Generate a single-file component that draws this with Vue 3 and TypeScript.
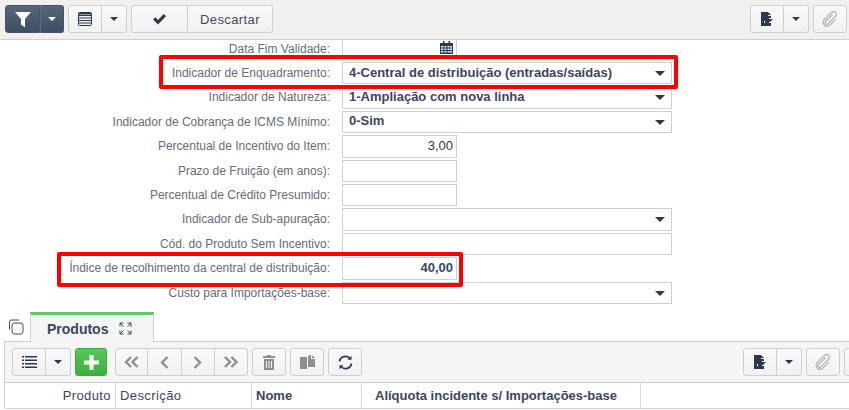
<script setup lang="ts">
interface Row { label: string; kind: 'date' | 'select' | 'short' | 'long'; value?: string; light?: boolean }
const rows: Row[] = [
  { label: 'Data Fim Validade:', kind: 'date' },
  { label: 'Indicador de Enquadramento:', kind: 'select', value: '4-Central de distribuição (entradas/saídas)' },
  { label: 'Indicador de Natureza:', kind: 'select', value: '1-Ampliação com nova linha' },
  { label: 'Indicador de Cobrança de ICMS Mínimo:', kind: 'select', value: '0-Sim' },
  { label: 'Percentual de Incentivo do Item:', kind: 'short', value: '3,00', light: true },
  { label: 'Prazo de Fruição (em anos):', kind: 'short' },
  { label: 'Percentual de Crédito Presumido:', kind: 'short' },
  { label: 'Indicador de Sub-apuração:', kind: 'select' },
  { label: 'Cód. do Produto Sem Incentivo:', kind: 'long' },
  { label: 'Índice de recolhimento da central de distribuição:', kind: 'short', value: '40,00' },
  { label: 'Custo para Importações-base:', kind: 'select' },
]
</script>

<template>
  <div class="page">
    <header class="toolbar">
      <div class="group dark">
        <button class="btn w36">
          <svg width="16" height="17" viewBox="0 0 16 17"><path d="M0 1h16L10 8v8.500L6 13.500V8z" fill="#fff" /></svg>
        </button>
        <button class="btn w24"><i class="caret white"></i></button>
      </div>
      <div class="group">
        <button class="btn w33">
          <svg width="15" height="14" viewBox="0 0 15 14" fill="none" stroke="#2b3a52"><rect x=".5" y=".5" width="13" height="13" rx="1" /><path d="M1 3.500h12M1 6h12M1 8.500h12M1 11h12" /><path d="M1 1.500h12" stroke-width="2" /></svg>
        </button>
        <button class="btn w25"><i class="caret"></i></button>
      </div>
      <div class="group">
        <button class="btn w57">
          <svg width="15" height="12" viewBox="0 0 15 12"><path d="M1 6.500l2.300-2.300 2.700 2.700L11.700 1 14 3.300 6 11.500z" fill="#2b3a52" /></svg>
        </button>
        <button class="btn w85 text">Descartar</button>
      </div>
      <div class="spacer"></div>
      <div class="group">
        <button class="btn w33">
          <svg width="13" height="14" viewBox="0 0 13 14"><path d="M0 0h6l1 0v4h3v2H8v1h4l-2 2-1 1H8v1h2v3H0z" fill="#2b3a52" /><path d="M7 0l3 3H7z" fill="#2b3a52" /><path d="M3 9h1v2H3z" fill="#fff" /></svg>
        </button>
        <button class="btn w25"><i class="caret"></i></button>
      </div>
      <div class="group">
        <button class="btn w33 muted">
          <svg width="16" height="16" viewBox="0 0 16 16" fill="none" stroke="#a9a9a9" stroke-width="1.100"><path d="M10.500 3.500L3.500 10.500a1.700 1.700 0 0 0 2.400 2.400l7.500-7.500a2.800 2.800 0 0 0-4-4L2 8.800a4 4 0 0 0 5.600 5.600l6-6" /></svg>
        </button>
      </div>
    </header>

    <main class="form">
      <div v-for="(row, i) in rows" :key="i" class="row">
        <label class="label">{{ row.label }}</label>
        <div class="field" :class="row.kind">
          <span v-if="row.value" class="value" :class="{ light: row.light }">{{ row.value }}</span>
          <i v-if="row.kind === 'select'" class="caret field-caret"></i>
          <svg v-if="row.kind === 'date'" class="cal" width="13" height="13" viewBox="0 0 13 13">
            <path d="M0 2h13v11H0z" fill="#2b3a52" /><path d="M3 0h1.500v3H3zM8.500 0H10v3H8.500z" fill="#2b3a52" />
            <path d="M1 5h2.500v1.500H1zM4.500 5h2v1.500h-2zM7.500 5h2v1.500h-2zM10 5h2v1.500h-2zM1 7.500h2.500V9H1zM4.500 7.500h2V9h-2zM7.500 7.500h2V9h-2zM10 7.500h2V9h-2zM1 10h2.500v1.500H1zM4.500 10h2v1.500h-2zM7.500 10h2v1.500h-2zM10 10h2v1.500h-2z" fill="#e8e8e8" />
          </svg>
        </div>
      </div>
      <div class="highlight h1"></div>
      <div class="highlight h2"></div>
    </main>

    <section class="tabs">
      <svg class="copy" width="16" height="16" viewBox="0 0 16 16" fill="none" stroke="#3a4660"><rect x="4" y="4" width="11" height="11" rx="2.500" /><path d="M1.500 10.500V3a2 2 0 0 1 2-2h7.500" /></svg>
      <div class="tab">
        <span>Produtos</span>
        <svg width="13" height="13" viewBox="0 0 13 13" fill="none" stroke="#3a4660"><path d="M1 4.500V1h3.500M8.500 1H12v3.500M12 8.500V12H8.500M4.500 12H1V8.500M1 1l3.500 3.500M12 1L8.500 4.500M12 12L8.500 8.500M1 12l3.500-3.500" /></svg>
      </div>
    </section>

    <section class="panel">
      <div class="subbar">
        <div class="group">
          <button class="btn w33">
            <svg width="15" height="12" viewBox="0 0 15 12" fill="#2b3a52"><path d="M0 0h2v1.500H0zM3 0h12v1.500H3zM0 3.500h2V5H0zM3 3.500h12V5H3zM0 7h2v1.500H0zM3 7h12v1.500H3zM0 10.500h2V12H0zM3 10.500h12V12H3z" /></svg>
          </button>
          <button class="btn w25"><i class="caret"></i></button>
        </div>
        <button class="plus">
          <svg width="15" height="15" viewBox="0 0 15 15"><path d="M5.500 0h4v5.500H15v4H9.500V15h-4V9.500H0v-4h5.500z" fill="#fff" /></svg>
        </button>
        <div class="group nav">
          <button class="btn navbtn"><svg width="15" height="12" viewBox="0 0 15 12" fill="none" stroke="#8b8f96" stroke-width="2.400"><path d="M7 1L2 6l5 5M13.500 1l-5 5 5 5" /></svg></button>
          <button class="btn navbtn"><svg width="9" height="13" viewBox="0 0 9 13" fill="none" stroke="#8b8f96" stroke-width="2.400"><path d="M7.500 1L2 6.500 7.500 12" /></svg></button>
          <button class="btn navbtn"><svg width="9" height="13" viewBox="0 0 9 13" fill="none" stroke="#8b8f96" stroke-width="2.400"><path d="M1.500 1L7 6.500 1.500 12" /></svg></button>
          <button class="btn navbtn"><svg width="15" height="12" viewBox="0 0 15 12" fill="none" stroke="#8b8f96" stroke-width="2.400"><path d="M2 1l5 5-5 5M8.500 1l5 5-5 5" /></svg></button>
        </div>
        <div class="group">
          <button class="btn w33"><svg width="12" height="15" viewBox="0 0 12 15" fill="#8b8f96"><path d="M4 0h4v1h4v2H0V1h4zM1 4h10v11H1zM3 6v7h1V6zM5.500 6v7h1V6zM8 6v7h1V6z" fill-rule="evenodd" /></svg></button>
        </div>
        <div class="group">
          <button class="btn w33"><svg width="15" height="14" viewBox="0 0 15 14" fill="#8b8f96"><path d="M0 2h7v12H0zM8 1l2-1h1v4h4v8H8zM12 0l3 3h-3z" /></svg></button>
        </div>
        <div class="group">
          <button class="btn w33"><svg width="15" height="15" viewBox="0 0 15 15" fill="none" stroke="#2b3a52" stroke-width="1.700"><path d="M1.500 6.500A6 6 0 0 1 12 3.500M13.500 8.500A6 6 0 0 1 3 11.500" /><path d="M13.500 .8v4h-4zM1.500 14.200v-4h4z" fill="#2b3a52" stroke="none" /></svg></button>
        </div>
        <div class="spacer"></div>
        <div class="group">
          <button class="btn w33">
            <svg width="13" height="14" viewBox="0 0 13 14"><path d="M0 0h6l1 0v4h3v2H8v1h4l-2 2-1 1H8v1h2v3H0z" fill="#2b3a52" /><path d="M7 0l3 3H7z" fill="#2b3a52" /><path d="M3 9h1v2H3z" fill="#fff" /></svg>
          </button>
          <button class="btn w25"><i class="caret"></i></button>
        </div>
        <div class="group">
          <button class="btn w33 muted">
            <svg width="16" height="16" viewBox="0 0 16 16" fill="none" stroke="#a9a9a9" stroke-width="1.100"><path d="M10.500 3.500L3.500 10.500a1.700 1.700 0 0 0 2.400 2.400l7.500-7.500a2.800 2.800 0 0 0-4-4L2 8.800a4 4 0 0 0 5.600 5.600l6-6" /></svg>
          </button>
        </div>
        <div class="group"><button class="btn w33"></button></div>
      </div>
      <div class="grid-head">
        <div class="cell c-prod">Produto</div>
        <div class="cell c-desc">Descrição</div>
        <div class="cell c-nome">Nome</div>
        <div class="cell c-aliq">Alíquota incidente s/ Importações-base</div>
        <div class="cell c-rest"></div>
      </div>
    </section>
  </div>
</template>

<style>
html, body { margin: 0; background: #fff; overflow: hidden; }
</style>

<style scoped>
.page {
  width: 849px;
  height: 410px;
  overflow: hidden;
  font-family: "Liberation Sans", Arial, sans-serif;
  font-size: 12px;
  color: #3a4660;
  background: #fff;
  position: relative;
}
.toolbar {
  background: #f1f0ee;
  border-bottom: 1px solid #d0d0d0;
  display: flex;
  gap: 4px;
  padding: 5px 2px 0 5px;
  box-sizing: border-box;
  height: 40px;
  position: relative;
  z-index: 1;
}
.spacer { flex: 1; }
.group { display: flex; height: 28px; }
.btn {
  height: 28px;
  box-sizing: border-box;
  padding: 0;
  margin: 0;
  border: 1px solid #cfcfcf;
  border-left-width: 0;
  background: linear-gradient(#f9f9f9, #f1f1f1);
  display: flex;
  align-items: center;
  justify-content: center;
  font: inherit;
  color: inherit;
}
.group .btn:first-child { border-left-width: 1px; border-radius: 3px 0 0 3px; }
.group .btn:last-child { border-radius: 0 3px 3px 0; }
.group .btn:only-child { border-radius: 3px; }
.w24 { width: 24px; }
.w25 { width: 25px; }
.w33 { width: 34px; }
.w36 { width: 35px; }
.w57 { width: 57px; }
.w85 { width: 85px; }
.navbtn { width: 33.250px; }
.text { font-size: 13px; letter-spacing: .4px; color: #3f4b62; }
.group.dark .btn { background: linear-gradient(#566579, #3f4e63); border-color: #45546a; }
.group.dark .btn + .btn { border-left: 1px solid #5c6a7e; }
.caret {
  display: block;
  width: 0;
  height: 0;
  border-left: 4px solid transparent;
  border-right: 4px solid transparent;
  border-top: 4px solid #2b3a52;
}
.caret.white { border-top-color: #fff; }

.form {
  height: 272px;
  position: relative;
  overflow: hidden;
}
.row {
  display: flex;
  align-items: flex-start;
  height: 24.400px;
}
.row:first-child { margin-top: -2.400px; }
.label {
  width: 330px;
  text-align: right;
  font-size: 12px;
  line-height: 22px;
  color: #646c7a;
  flex: none;
}
.field {
  margin-left: 12px;
  height: 22.400px;
  box-sizing: border-box;
  border: 1px solid #cfcfcf;
  background: #fff;
  display: flex;
  align-items: center;
  position: relative;
  flex: none;
}
.field.select, .field.long { width: 330px; }
.field.short { width: 115px; justify-content: flex-end; padding-right: 3px; }
.field.date { width: 115px; border-top: 0; border-bottom: 0; border-right: 1px solid #cfcfcf; }
.field .cal { position: absolute; left: 97px; top: 3px; }
.value {
  font-weight: 700;
  font-size: 13px;
  color: #3a4660;
  white-space: nowrap;
  padding-bottom: 2px;
}
.value.light { font-weight: 400; color: #2b3a52; }
.field.select .value { padding-left: 6px; }
.field-caret {
  position: absolute;
  right: 6px;
  top: 8px;
  border-left-width: 5px;
  border-right-width: 5px;
  border-top-width: 5px;
}
.highlight {
  position: absolute;
  box-sizing: border-box;
  border: 4px solid #ff0000;
  border-radius: 2px;
  pointer-events: none;
}
.h1 { left: 159px; top: 15px; width: 519px; height: 34px; }
.h2 { left: 57px; top: 212px; width: 406px; height: 35px; }

.tabs {
  height: 29px;
  position: relative;
  padding-left: 30px;
}
.copy { position: absolute; left: 8px; top: 7px; }
.tab {
  width: 124px;
  height: 30px;
  box-sizing: border-box;
  background: #f5f5f5;
  border: 1px solid #cfcfcf;
  border-top: 3px solid #5fcb5f;
  border-bottom: 0;
  display: flex;
  align-items: center;
  gap: 11px;
  padding-left: 16px;
  font-weight: 700;
  font-size: 14px;
  position: relative;
  z-index: 1;
}
.panel {
  margin-left: 4px;
  border: 1px solid #cfcfcf;
  border-right: 0;
  border-bottom: 0;
  height: 68px;
  box-sizing: border-box;
}
.subbar {
  height: 41px;
  box-sizing: border-box;
  background: #f5f5f5;
  border-bottom: 1px solid #cfcfcf;
  display: flex;
  gap: 4px;
  padding: 6px 0 0 7px;
  margin-right: -29px;
}
.nav { margin-left: 4px; }
.plus {
  width: 32px;
  height: 28px;
  box-sizing: border-box;
  padding: 0;
  border: 1px solid #3fa53f;
  border-radius: 3px;
  background: linear-gradient(#57c957, #3faf3f);
  display: flex;
  align-items: center;
  justify-content: center;
}
.grid-head {
  display: flex;
  height: 26px;
  box-sizing: border-box;
  border-bottom: 1px solid #cfcfcf;
  margin-left: 1px;
}
.cell {
  box-sizing: border-box;
  border-right: 1px solid #dcdcdc;
  line-height: 25px;
  font-size: 13px;
  font-weight: 700;
  white-space: nowrap;
  padding: 0 4px;
  flex: none;
}
.c-prod { width: 110px; text-align: right; font-weight: 400; letter-spacing: .4px; padding-right: 4px; }
.c-desc { width: 136px; font-weight: 400; letter-spacing: .4px; }
.c-nome { width: 110px; }
.c-aliq { width: 279px; padding-left: 13px; }
.c-rest { flex: 1; border-right: 0; }
</style>
